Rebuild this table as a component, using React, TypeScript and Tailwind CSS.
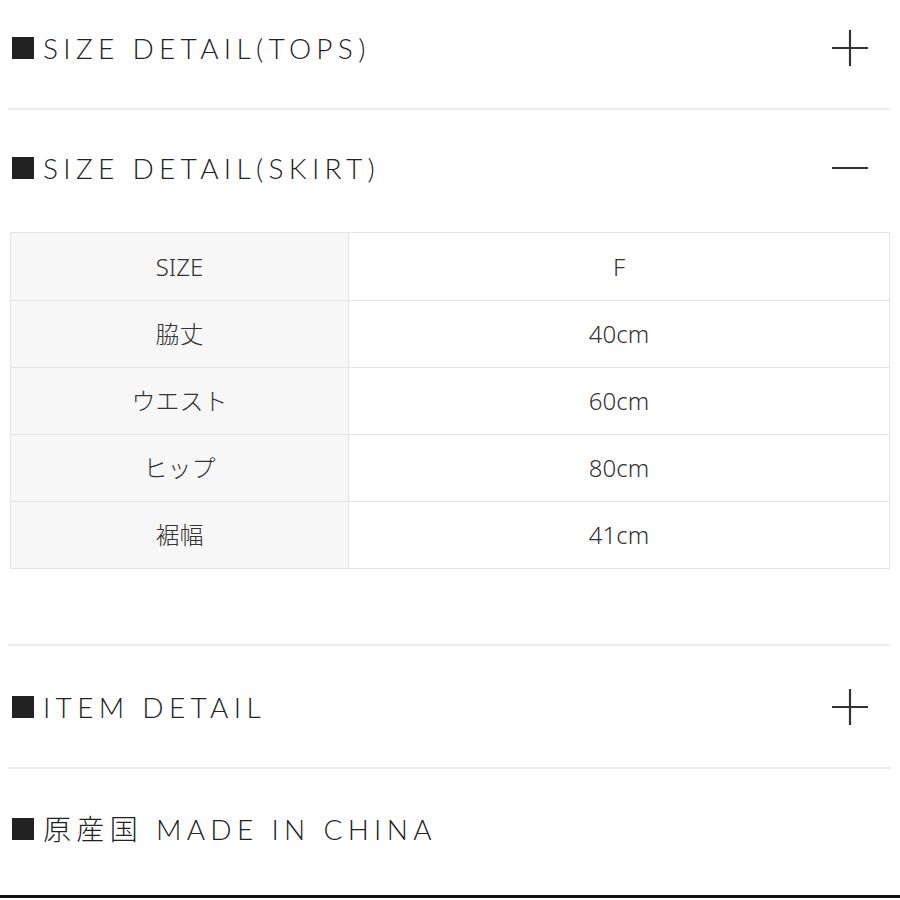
import React from "react";

const head = "font-['Lato','Noto_Sans_CJK_JP',sans-serif] font-light text-[28px] tracking-[0.19em] text-[#222]";
const cell = "font-['Noto_Sans','Noto_Sans_CJK_JP',sans-serif] font-light text-[24px] text-[#333]";

const rows = [
  ["SIZE", "F"],
  ["脇丈", "40cm"],
  ["ウエスト", "60cm"],
  ["ヒップ", "80cm"],
  ["裾幅", "41cm"],
];

const Plus = () => (
  <svg width="36" height="36" viewBox="0 0 36 36" className="text-[#333]">
    <path d="M0 18H36M18 0V36" stroke="currentColor" strokeWidth="2.2" />
  </svg>
);

const Minus = () => (
  <svg width="36" height="36" viewBox="0 0 36 36" className="text-[#333]">
    <path d="M0 18H36" stroke="currentColor" strokeWidth="2.2" />
  </svg>
);

const Header = ({ title, icon, h }: { title: string; icon?: React.ReactNode; h: string }) => (
  <div className={`flex items-center justify-between pl-[12px] pr-[32px] ${h}`}>
    <div className="flex items-center gap-[9px]">
      <span className="block w-[22px] h-[22px] bg-[#222]" />
      <span className={head}>{title}</span>
    </div>
    {icon}
  </div>
);

export default function App() {
  return (
    <div className="w-[900px] h-[900px] bg-white overflow-hidden flex flex-col">
      <Header title="SIZE DETAIL(TOPS)" icon={<Plus />} h="h-[96px]" />
      <div className="mt-[12px] mx-[8px] mr-[10px] h-[2px] bg-[#ececec]" />

      <Header title="SIZE DETAIL(SKIRT)" icon={<Minus />} h="h-[116px]" />
      <div className="mt-[6px] ml-[10px] mr-[10px] border border-[#e4e4e4] flex flex-col">
        {rows.map(([k, v], i) => (
          <div key={k} className={`flex h-[67px] ${i > 0 ? "border-t border-[#e4e4e4]" : ""}`}>
            <div className={`w-[338px] bg-[#f7f7f7] border-r border-[#e4e4e4] flex items-center justify-center ${cell}`}>
              {k}
            </div>
            <div className={`flex-1 flex items-center justify-center ${cell}`}>{v}</div>
          </div>
        ))}
      </div>

      <div className="mt-[75px] mx-[8px] mr-[10px] h-[2px] bg-[#ececec]" />
      <Header title="ITEM DETAIL" icon={<Plus />} h="h-[121px]" />
      <div className="mx-[8px] mr-[10px] h-[2px] bg-[#ececec]" />
      <Header title="原産国 MADE IN CHINA" h="h-[120px]" />
      <div className="mt-[6px] h-[3px] bg-[#111]" />
    </div>
  );
}
